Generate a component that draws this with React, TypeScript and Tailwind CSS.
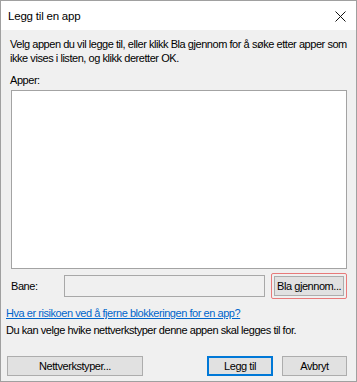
export default function App() {
  return (
    <div className="w-[357px] h-[382px] border border-[#a0a0a0] bg-[#f0f0f0] flex flex-col text-[11px] leading-[14px] tracking-[-0.45px] text-black font-['Liberation_Sans',Arial,sans-serif] overflow-hidden whitespace-nowrap">
      <div className="h-[29px] bg-white flex items-center justify-between pl-[7px] pr-[10px] shrink-0">
        <span className="text-[11.5px] tracking-[-0.2px]">Legg til en app</span>
        <svg width="11" height="11" viewBox="0 0 11 11" className="mt-[1px]">
          <path d="M0.5 0.5 L10.5 10.5 M10.5 0.5 L0.5 10.5" stroke="#111" strokeWidth="1" fill="none" />
        </svg>
      </div>

      <div className="flex flex-col pl-[9px] pr-[9px] pt-[7px]">
        <p>
          Velg appen du vil legge til, eller klikk Bla gjennom for å søke etter apper som
          <br />
          ikke vises i listen, og klikk deretter OK.
        </p>
        <div className="mt-[8px]">Apper:</div>
        <div className="mt-[3px] ml-[1px] w-[336px] h-[179px] bg-white border border-[#a3a3a3] shrink-0" />

        <div className="mt-[4px] flex items-center h-[26px] shrink-0">
          <span className="w-[54px] pl-[1px]">Bane:</span>
          <div className="w-[202px] h-[22px] border border-[#a8a8a8] bg-[#f0f0f0]" />
          <div className="ml-[6px] w-[76px] h-[26px] border border-[#e87a7a] rounded-[2px] p-[2px] flex">
            <button className="flex-1 bg-[#e1e1e1] border border-[#adadad] flex items-center justify-center">
              Bla gjennom...
            </button>
          </div>
        </div>
      </div>

      <div className="flex flex-col pl-[5px] pr-[9px]">
        <a className="mt-[7px] text-[#0066cc] underline underline-offset-[1px]">
          Hva er risikoen ved å fjerne blokkeringen for en app?
        </a>
        <div className="mt-[3px]">Du kan velge hvike nettverkstyper denne appen skal legges til for.</div>

        <div className="mt-[19px] flex items-center shrink-0">
          <button className="ml-[1px] w-[136px] h-[20px] bg-[#e1e1e1] border border-[#adadad] flex items-center justify-center">
            Nettverkstyper...
          </button>
          <button className="ml-[64px] w-[66px] h-[20px] bg-[#e1e1e1] border-2 border-[#0078d7] flex items-center justify-center">
            Legg til
          </button>
          <button className="ml-[9px] w-[65px] h-[20px] bg-[#e1e1e1] border border-[#adadad] flex items-center justify-center">
            Avbryt
          </button>
        </div>
      </div>
    </div>
  );
}
